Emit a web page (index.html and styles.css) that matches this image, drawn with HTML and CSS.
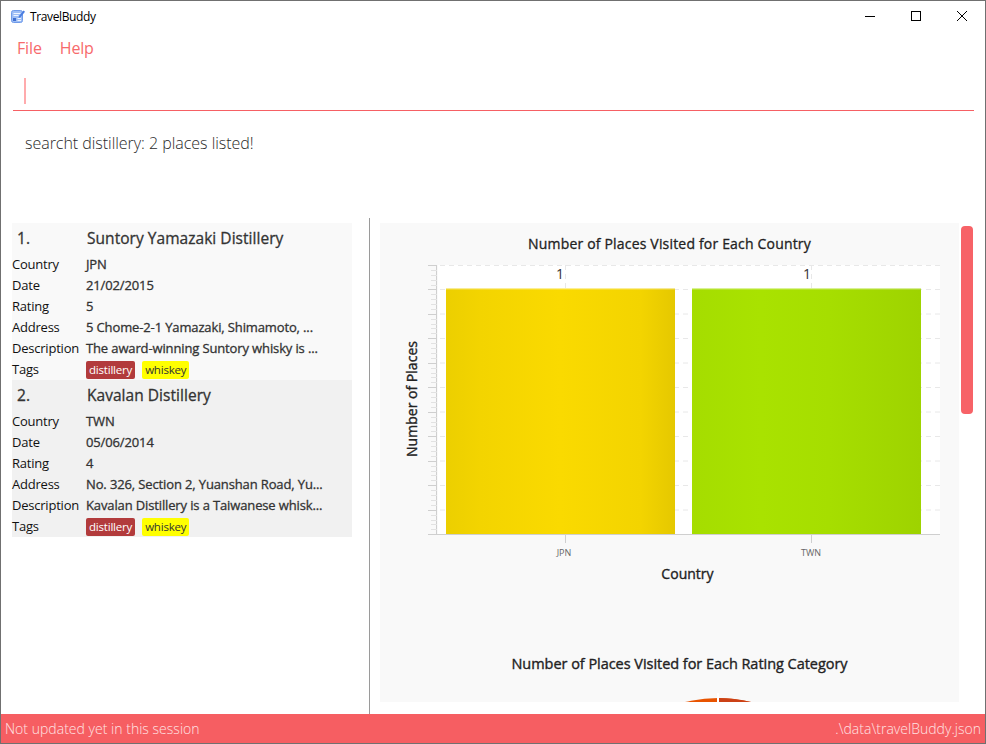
FILE: index.html
```html
<!DOCTYPE html>
<html lang="en">
<head>
<meta charset="utf-8">
<title>TravelBuddy</title>
<link rel="stylesheet" href="styles.css">
</head>
<body>
<div class="window">
  <header class="titlebar">
    <svg class="app-icon" width="16" height="16" viewBox="0 0 16 16">
      <rect x="1.500" y="2.500" width="11" height="12" rx="2" fill="#9dbdf5" stroke="#6f9bea"/>
      <path d="M3.500 5.500h7M3.500 7.500h5" stroke="#eef4ff" stroke-width="1"/>
      <rect x="3" y="10" width="3" height="3" fill="#3f6fd0"/>
      <path d="M7.500 10.500h3.500M7.500 12.500h3.500" stroke="#eef4ff"/>
      <path d="M9 8l4.500-5.500 1.500 1.200-4.500 5.500-2 .8z" fill="#4a7de0"/>
    </svg>
    <span class="app-title">TravelBuddy</span>
    <div class="win-controls">
      <svg width="10" height="10" viewBox="0 0 10 10"><path d="M0 5.500h10" stroke="#000" fill="none"/></svg>
      <svg width="10" height="10" viewBox="0 0 10 10"><rect x=".5" y=".5" width="9" height="9" stroke="#000" fill="none"/></svg>
      <svg width="10" height="10" viewBox="0 0 10 10"><path d="M0 0l10 10M10 0L0 10" stroke="#000" fill="none"/></svg>
    </div>
  </header>

  <nav class="menu">
    <span>File</span>
    <span>Help</span>
  </nav>

  <div class="command"><span class="caret"></span></div>
  <div class="result">searcht distillery: 2 places listed!</div>

  <main class="content">
    <section class="list">
      <article class="card">
        <div class="card-head"><span class="index">1.</span><span class="name">Suntory Yamazaki Distillery</span></div>
        <div class="row"><span class="label">Country</span><span class="value">JPN</span></div>
        <div class="row"><span class="label">Date</span><span class="value">21/02/2015</span></div>
        <div class="row"><span class="label">Rating</span><span class="value">5</span></div>
        <div class="row"><span class="label">Address</span><span class="value">5 Chome-2-1 Yamazaki, Shimamoto, ...</span></div>
        <div class="row"><span class="label">Description</span><span class="value">The award-winning Suntory whisky is ...</span></div>
        <div class="row"><span class="label">Tags</span><span class="tags"><span class="tag tag-red">distillery</span><span class="tag tag-yellow">whiskey</span></span></div>
      </article>
      <article class="card card-alt">
        <div class="card-head"><span class="index">2.</span><span class="name">Kavalan Distillery</span></div>
        <div class="row"><span class="label">Country</span><span class="value">TWN</span></div>
        <div class="row"><span class="label">Date</span><span class="value">05/06/2014</span></div>
        <div class="row"><span class="label">Rating</span><span class="value">4</span></div>
        <div class="row"><span class="label">Address</span><span class="value">No. 326, Section 2, Yuanshan Road, Yu...</span></div>
        <div class="row"><span class="label">Description</span><span class="value">Kavalan Distillery is a Taiwanese whisk...</span></div>
        <div class="row"><span class="label">Tags</span><span class="tags"><span class="tag tag-red">distillery</span><span class="tag tag-yellow">whiskey</span></span></div>
      </article>
    </section>

    <section class="charts">
      <div class="chart-panel">
        <svg class="chart" width="579" height="479" viewBox="0 0 579 479">
          <defs>
            <linearGradient id="yellow" x1="0" x2="1" y1="0" y2="0">
              <stop offset="0" stop-color="#eccf00"/><stop offset=".15" stop-color="#f3d400"/><stop offset=".5" stop-color="#fada00"/><stop offset=".85" stop-color="#f3d400"/><stop offset="1" stop-color="#e5c800"/>
            </linearGradient>
            <linearGradient id="green" x1="0" x2="1" y1="0" y2="0">
              <stop offset="0" stop-color="#a5dd00"/><stop offset=".3" stop-color="#a9e200"/><stop offset=".6" stop-color="#a6de00"/><stop offset="1" stop-color="#9ed300"/>
            </linearGradient>
          </defs>
          <rect class="plot" x="58" y="42" width="502" height="269"/>
          <path class="grid" d="M60 42.500H560M60 66.500H560M60 91H560M60 115.500H560M60 140H560M60 164.500H560M60 189H560M60 213.500H560M60 238H560M60 262.500H560M60 287H560M185.500 42V311M431.500 42V311"/>
          <rect x="66" y="65.500" width="229" height="245.500" fill="url(#yellow)"/>
          <rect x="312" y="65.500" width="229" height="245.500" fill="url(#green)"/>
          <path class="bar-top" d="M66 66H295M312 66H541"/>
          <path class="axis" d="M56.500 42V311M48 311.500H560M185.500 311V320M431.500 311V320"/>
          <path class="major" d="M48 42.500H57M48 66.500H57M48 91.500H57M48 115.500H57M48 140.500H57M48 164.500H57M48 189.500H57M48 213.500H57M48 238.500H57M48 262.500H57M48 287.500H57"/>
          <path class="minor" d="M51 47.500H57M51 52.500H57M51 57.500H57M51 62.500H57M51 71.500H57M51 76.500H57M51 81.500H57M51 86.500H57M51 96.500H57M51 101.500H57M51 105.500H57M51 110.500H57M51 120.500H57M51 125.500H57M51 130.500H57M51 135.500H57M51 145.500H57M51 150.500H57M51 154.500H57M51 159.500H57M51 169.500H57M51 174.500H57M51 179.500H57M51 184.500H57M51 194.500H57M51 199.500H57M51 203.500H57M51 208.500H57M51 218.500H57M51 223.500H57M51 228.500H57M51 233.500H57M51 243.500H57M51 248.500H57M51 252.500H57M51 257.500H57M51 267.500H57M51 272.500H57M51 277.500H57M51 282.500H57M51 292.500H57M51 297.500H57M51 301.500H57M51 306.500H57"/>
          <text class="chart-title" x="289.500" y="26" text-anchor="middle">Number of Places Visited for Each Country</text>
          <text class="bar-value" x="180" y="56" text-anchor="middle">1</text>
          <text class="bar-value" x="427" y="56" text-anchor="middle">1</text>
          <text class="tick-label" x="184" y="333" text-anchor="middle">JPN</text>
          <text class="tick-label" x="431" y="333" text-anchor="middle">TWN</text>
          <text class="axis-label" x="307.500" y="356" text-anchor="middle">Country</text>
          <text class="axis-label" transform="translate(37 176) rotate(-90)" text-anchor="middle">Number of Places</text>
          <text class="chart-title-lg" x="299.500" y="446" text-anchor="middle">Number of Places Visited for Each Rating Category</text>
          <circle cx="338" cy="613" r="138" fill="#e85400"/>
          <path d="M338 475A138 138 0 0 1 440 520L338 613Z" fill="#cb4116"/>
          <path d="M338 470V479" stroke="#fff" stroke-width="2" fill="none"/>
        </svg>
      </div>
      <div class="scroll-track"><div class="scroll-thumb"></div></div>
    </section>
  </main>

  <footer class="status">
    <span>Not updated yet in this session</span>
    <span>.\data\travelBuddy.json</span>
  </footer>
</div>
</body>
</html>
```
FILE: styles.css
```css
* { box-sizing: border-box; }
html, body { margin: 0; padding: 0; }
body { width: 986px; height: 744px; overflow: hidden; background: #fff; font-family: "Open Sans", "Noto Sans", sans-serif; }
.window { width: 986px; height: 744px; display: flex; flex-direction: column; border: 1px solid #707070; background: #fff; }

.titlebar { height: 30px; flex: none; display: flex; align-items: center; padding-left: 9px; }
.app-icon { flex: none; }
.app-title { margin-left: 4px; font-size: 12px; letter-spacing: -.38px; color: #000; }
.win-controls { margin-left: auto; display: flex; gap: 36px; padding-right: 18px; }
.win-controls svg { display: block; }

.menu { height: 36px; flex: none; display: flex; gap: 18px; padding: 0 0 2px 16px; align-items: center; font-size: 16px; color: #f76a6c; letter-spacing: -.15px; }

.command { height: 44px; flex: none; margin: 0 11px 0 12px; padding: 11px 0 0 11px; border-bottom: 1px solid #f66064; }
.caret { display: block; width: 2px; height: 26px; background: #ffabad; }

.result { height: 107px; flex: none; padding: 21px 0 0 24px; font-size: 16px; color: #2a2a2a; letter-spacing: -.03px; font-weight: 300; line-height: 22px; }

.content { flex: 1; min-height: 0; display: flex; }
.list { width: 369px; flex: none; padding: 5px 17px 0 11px; border-right: 1px solid #9a9a9a; }
.card { height: 157px; background: #f9f9f9; font-size: 13px; letter-spacing: -.22px; color: #222; }
.card-alt { background: #f1f1f1; }
.card-head { height: 31px; padding-bottom: 2px; display: flex; align-items: center; color: #333; font-size: 15.500px; letter-spacing: .04px; -webkit-text-stroke: .3px #333; }
.index { width: 75px; padding-left: 5px; }
.row { height: 21px; padding-bottom: 2px; display: flex; align-items: center; }
.label { width: 74px; flex: none; color: #111; }
.value { color: #333; white-space: nowrap; letter-spacing: -.13px; -webkit-text-stroke: .3px #333; }
.tags { display: flex; gap: 7px; margin-bottom: -2px; }
.tag { height: 18px; line-height: 18px; padding: 0 3px; border-radius: 2px; font-size: 11.500px; letter-spacing: -.2px; }
.tag-red { background: #b23b3c; color: #fff; }
.tag-yellow { background: #ffff00; color: #333; }

.charts { flex: 1; min-width: 0; display: flex; padding: 5px 0 11px 10px; }
.chart-panel { width: 579px; height: 479px; flex: none; background: #f9f9f9; overflow: hidden; }
.chart { display: block; font-family: "Open Sans", "Noto Sans", sans-serif; }
.plot { fill: #fff; }
.grid { stroke: #e8e8e8; stroke-dasharray: 5 4; fill: none; }
.bar-top { stroke: #fff; stroke-opacity: .35; fill: none; }
.axis { stroke: #cfcfcf; fill: none; }
.major { stroke: #cfcfcf; fill: none; }
.minor { stroke: #e2e2e2; fill: none; }
.chart-title { font-size: 14px; fill: #222; stroke: #222; stroke-width: .3px; letter-spacing: .18px; }
.chart-title-lg { font-size: 14.500px; fill: #222; stroke: #222; stroke-width: .35px; letter-spacing: -.04px; }
.bar-value { font-size: 14px; fill: #333; }
.tick-label { font-size: 9px; fill: #666; }
.axis-label { font-size: 14px; fill: #222; stroke: #222; stroke-width: .35px; letter-spacing: .02px; }
.scroll-track { margin-left: 2px; padding-top: 3px; }
.scroll-thumb { width: 12px; height: 188px; border-radius: 4px; background: #f76267; }

.status { height: 29px; flex: none; display: flex; justify-content: space-between; align-items: center; padding: 0 4px; background: #f65e62; color: #ffe3e3; font-size: 14px; letter-spacing: .02px; font-weight: 300; }
```
